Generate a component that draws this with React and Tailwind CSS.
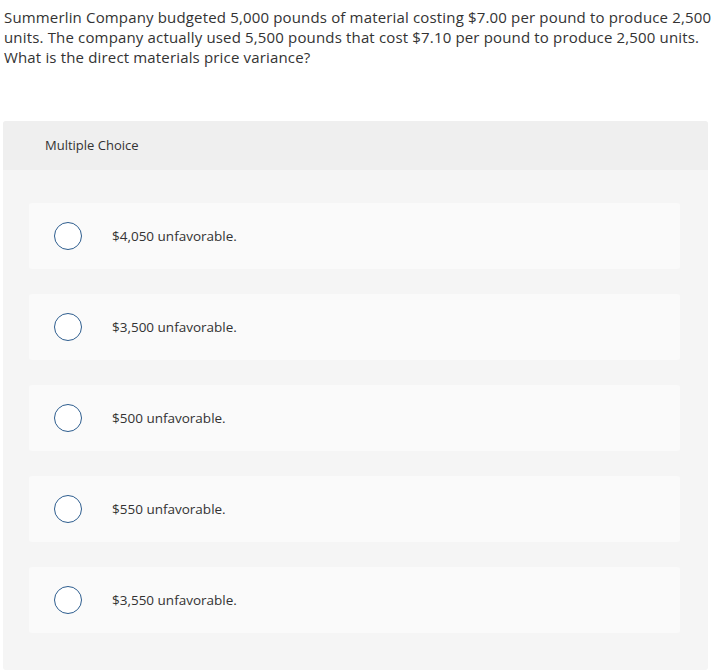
import React from "react";

const choices = [
  "$4,050 unfavorable.",
  "$3,500 unfavorable.",
  "$500 unfavorable.",
  "$550 unfavorable.",
  "$3,550 unfavorable.",
];

export default function App() {
  return (
    <div className="min-h-screen bg-white text-[#333333]" style={{ fontFamily: "'Open Sans', Lato, sans-serif" }}>
      <div className="px-[4px] pt-[7px] text-[15px] leading-[20px] tracking-[0.16px] whitespace-nowrap">
        <p>
          Summerlin Company budgeted 5,000 pounds of material costing $7.00 per pound to produce 2,500
          <br />
          units. The company actually used 5,500 pounds that cost $7.10 per pound to produce 2,500 units.
          <br />
          What is the direct materials price variance?
        </p>
      </div>

      <div className="ml-[3px] mr-[15px] mt-[54px] rounded-[3px] bg-[#f5f5f5] pb-[37px]">
        <div className="flex h-[49px] items-center rounded-t-[3px] bg-[#efefef] pl-[42px] text-[13px]">
          Multiple Choice
        </div>
        <div className="mt-[33px] flex flex-col gap-[25px] pl-[26px] pr-[28px]">
          {choices.map((c, i) => (
            <div key={i} className="flex h-[66px] items-center rounded-[3px] bg-[#fafafa]">
              <div className="ml-[25px] h-[28px] w-[28px] shrink-0 rounded-full border-[1.5px] border-[#2d5d8e] bg-white" />
              <span className="ml-[30px] text-[13.5px]">{c}</span>
            </div>
          ))}
        </div>
      </div>
    </div>
  );
}
